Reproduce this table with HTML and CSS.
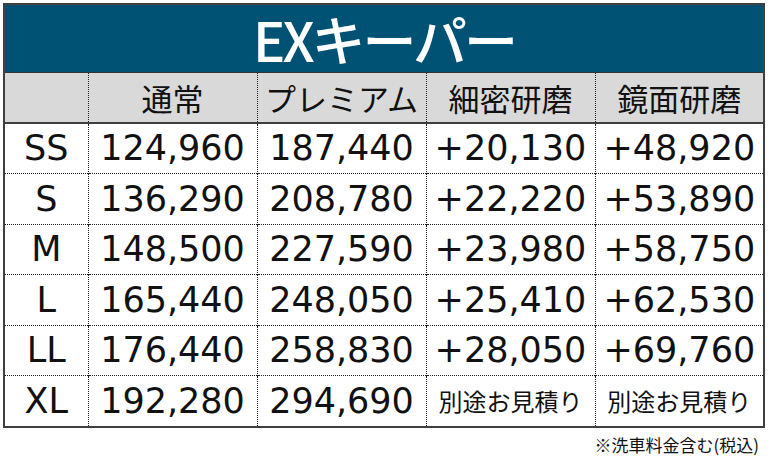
FILE: index.html
```html
<!DOCTYPE html>
<html lang="ja">
<head>
<meta charset="utf-8">
<title>EXキーパー</title>
<link rel="stylesheet" href="styles.css">
</head>
<body>
<div class="wrap">
  <table class="price">
    <colgroup>
      <col class="c-size">
      <col class="c-val">
      <col class="c-val">
      <col class="c-val">
      <col class="c-val">
    </colgroup>
    <thead>
      <tr class="title-row"><th colspan="5" class="title">EXキーパー</th></tr>
      <tr class="head-row">
        <th></th>
        <th>通常</th>
        <th>プレミアム</th>
        <th>細密研磨</th>
        <th>鏡面研磨</th>
      </tr>
    </thead>
    <tbody>
      <tr class="r50"><td class="size">SS</td><td>124,960</td><td>187,440</td><td>+20,130</td><td>+48,920</td></tr>
      <tr class="r51"><td class="size">S</td><td>136,290</td><td>208,780</td><td>+22,220</td><td>+53,890</td></tr>
      <tr class="r50"><td class="size">M</td><td>148,500</td><td>227,590</td><td>+23,980</td><td>+58,750</td></tr>
      <tr class="r51"><td class="size">L</td><td>165,440</td><td>248,050</td><td>+25,410</td><td>+62,530</td></tr>
      <tr class="r50"><td class="size">LL</td><td>176,440</td><td>258,830</td><td>+28,050</td><td>+69,760</td></tr>
      <tr class="r51"><td class="size">XL</td><td>192,280</td><td>294,690</td><td class="est">別途お見積り</td><td class="est">別途お見積り</td></tr>
    </tbody>
  </table>
  <p class="note">※洗車料金含む(税込)</p>
</div>
</body>
</html>
```

FILE: styles.css
```css
html, body {
  margin: 0;
  padding: 0;
  background: #ffffff;
}
.wrap {
  padding: 3px 0 0 3px;
  width: 760px;
}
.price {
  border-collapse: collapse;
  table-layout: fixed;
  width: 760px;
  border: 2px solid #3f3f3f;
  font-family: "DejaVu Sans", "Noto Sans CJK JP", sans-serif;
  color: #111111;
}
.c-size { width: 84px; }
.c-val { width: 169px; }
.price th, .price td {
  padding: 0;
  text-align: center;
  vertical-align: middle;
  white-space: nowrap;
}
.title-row .title {
  height: 67px;
  background: #005274;
  color: #ffffff;
  font-family: "Noto Sans CJK JP", sans-serif;
  font-weight: 500;
  font-size: 54px;
  letter-spacing: -3px;
  line-height: 60px;
  border-bottom: 1px solid #333333;
}
.head-row th {
  height: 49px;
  background: #d9d9d9;
  font-family: "Noto Sans CJK JP", sans-serif;
  font-weight: 400;
  font-size: 31px;
  line-height: 1;
  border-bottom: 2px solid #3f3f3f;
  border-left: 1px dotted #222222;
}
.head-row th:first-child { border-left: none; }
.price td {
  font-size: 35px;
  line-height: 1;
  border-left: 1px dotted #222222;
  border-top: 1px dotted #222222;
}
.price td:first-child { border-left: none; }
.price tbody tr:first-child td { border-top: none; }
.r50 td { height: 49px; }
.r51 td { height: 50px; }
.price td.est {
  font-family: "Noto Sans CJK JP", sans-serif;
  font-size: 24px;
}
.note {
  margin: 5px 0 0 0;
  width: 756px;
  text-align: right;
  font-family: "Noto Sans CJK JP", sans-serif;
  font-size: 17px;
  line-height: 24px;
  color: #111111;
}
```
